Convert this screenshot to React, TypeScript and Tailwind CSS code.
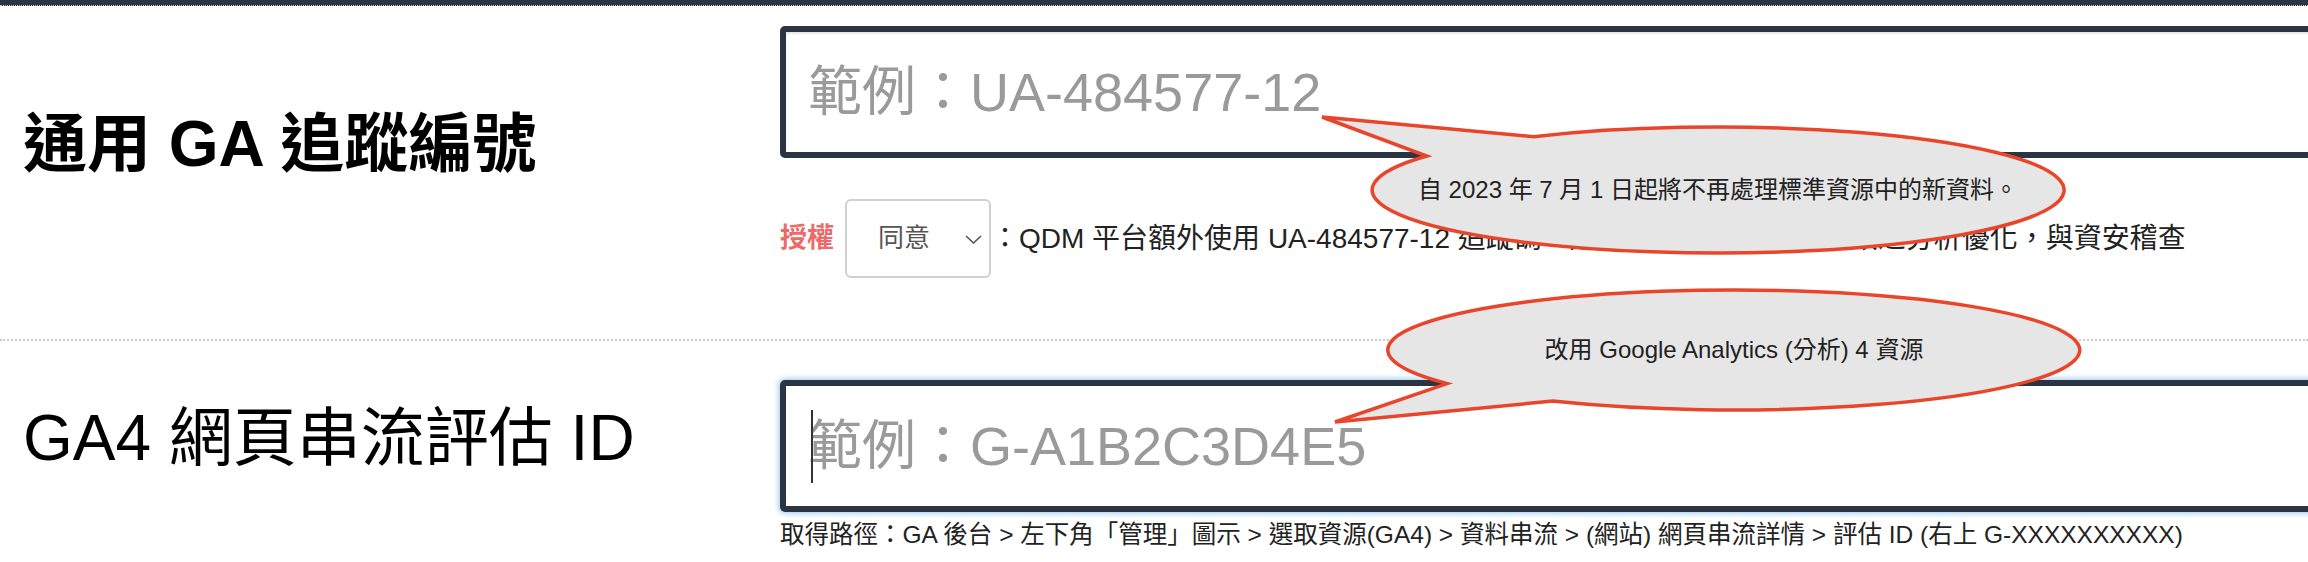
import React from 'react';

// 對話泡泡：橢圓 + 尖角，角度以度為單位（y 軸向下）
function bubblePath(cx: number, cy: number, rx: number, ry: number, from: number, to: number, tip: [number, number]) {
  const pt = (deg: number) => {
    const r = (deg * Math.PI) / 180;
    return `${(cx + rx * Math.cos(r)).toFixed(1)} ${(cy + ry * Math.sin(r)).toFixed(1)}`;
  };
  return `M ${pt(from)} A ${rx} ${ry} 0 1 1 ${pt(to)} L ${tip[0]} ${tip[1]} Z`;
}

const bubbles = [
  { d: bubblePath(1718, 190, 346, 63, 237.8, 212.7, [1322, 117]) },
  { d: bubblePath(1734, 350, 346, 60, 146, 121.6, [1335, 422]) },
];

export default function App() {
  return (
    <div className="relative h-[562px] w-full overflow-hidden bg-white font-['Liberation_Sans','Noto_Sans_CJK_TC',sans-serif] text-[#222]">
      <div className="h-[6px] border-b border-dotted border-[#c8c8c8] bg-[#2a3443]" />

      {/* 通用 GA 追蹤編號 */}
      <div className="flex pt-[20px] pb-[61px]">
        <div className="w-[780px] shrink-0 pl-[23px] pt-[86px]">
          <h2 className="whitespace-nowrap text-[64px] font-bold leading-none text-black">通用 GA 追蹤編號</h2>
        </div>
        <div className="w-[1600px] shrink-0">
          <input
            className="block h-[132px] w-full rounded-[5px] border-[6px] border-[#2a3443] pl-[22px] text-[54px] shadow-[inset_0_2px_2px_rgba(0,0,0,0.1)] outline-none placeholder:text-[#9a9a9a]"
            placeholder="範例：UA-484577-12"
          />
          <div className="mt-[41px] flex h-[79px] items-center">
            <span className="mr-[11px] text-[27px] font-bold text-[#ee6a6a]">授權</span>
            <div className="relative">
              <select className="block h-[79px] w-[146px] appearance-none rounded-md border-2 border-[#d0d0d0] bg-white pl-[31px] text-[26px] text-[#555] outline-none">
                <option>同意</option>
                <option>不同意</option>
              </select>
              <svg className="pointer-events-none absolute right-[9px] top-[36px]" width="17" height="9" viewBox="0 0 17 9" fill="none">
                <polyline points="1,1 8.5,8 16,1" stroke="#555" strokeWidth="1.6" />
              </svg>
            </div>
            <span className="whitespace-nowrap text-[28px]">
              ：QDM 平台額外使用 UA-484577-12 追蹤碼，進行網站流量與行銷成效之分析優化，與資安稽查
            </span>
          </div>
        </div>
      </div>

      <div className="border-t-2 border-dotted border-[#cccccc]" />

      {/* GA4 網頁串流評估 ID */}
      <div className="flex pt-[39px]">
        <div className="w-[780px] shrink-0 pl-[23px] pt-[26px]">
          <h2 className="whitespace-nowrap text-[64px] leading-none text-black">GA4 網頁串流評估 ID</h2>
        </div>
        <div className="w-[1600px] shrink-0">
          <div className="relative">
            <input
              className="block h-[132px] w-full rounded-[5px] border-[6px] border-[#2a3443] pl-[22px] text-[54px] shadow-[0_0_5px_2px_rgba(102,175,233,0.55)] outline-none placeholder:text-[#9a9a9a]"
              placeholder="範例：G-A1B2C3D4E5"
            />
            <span className="absolute left-[31px] top-[30px] h-[73px] w-[2px] bg-[#333]" />
          </div>
          <p className="mt-[5px] whitespace-nowrap text-[24.5px] leading-[36px]">
            取得路徑：GA 後台 &gt; 左下角「管理」圖示 &gt; 選取資源(GA4) &gt; 資料串流 &gt; (網站) 網頁串流詳情 &gt; 評估 ID (右上 G-XXXXXXXXXX)
          </p>
        </div>
      </div>

      {/* 提示泡泡 */}
      <svg className="pointer-events-none absolute left-0 top-0" width="2308" height="562" viewBox="0 0 2308 562">
        {bubbles.map((b, i) => (
          <path key={i} d={b.d} fill="#e6e6e6" stroke="#e9452b" strokeWidth="3.5" strokeLinejoin="miter" />
        ))}
      </svg>
      <div className="pointer-events-none absolute left-[1372px] top-[127px] flex h-[126px] w-[692px] items-center justify-center whitespace-nowrap text-[24px] text-[#222]">
        自 2023 年 7 月 1 日起將不再處理標準資源中的新資料。
      </div>
      <div className="pointer-events-none absolute left-[1388px] top-[290px] flex h-[120px] w-[692px] items-center justify-center whitespace-nowrap text-[24px] text-[#222]">
        改用 Google Analytics (分析) 4 資源
      </div>
    </div>
  );
}
